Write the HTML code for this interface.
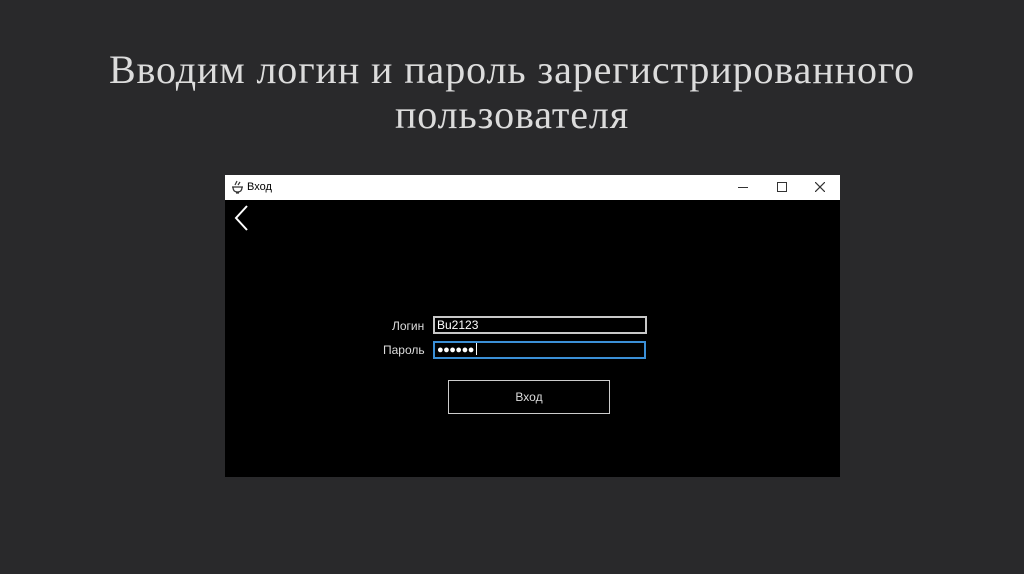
<!DOCTYPE html>
<html><head><meta charset="utf-8"><style>
body{margin:0;width:1024px;height:574px;background:#29292b;overflow:hidden;position:relative;font-family:"Liberation Sans",sans-serif}
.t{position:absolute;left:0;width:1024px;text-align:center;font-family:"Liberation Serif",serif;font-size:40px;color:#dcdcdc;line-height:45px;top:47px;letter-spacing:0.9px}
.win{position:absolute;left:225px;top:175px;width:615px;height:302px;background:#000}
.bar{position:absolute;left:0;top:0;width:615px;height:25px;background:#fff;font-size:11px;color:#000}
.lbl{position:absolute;color:#ddd;font-size:12px}
.in{position:absolute;box-sizing:border-box;border:2px solid #c8c8c8;background:#000;color:#fff;font-size:12px;padding-left:2px;line-height:14px}
</style></head><body>
<div class="t">Вводим логин и пароль зарегистрированного<br>пользователя</div>
<div class="win">
<div class="bar">
<svg style="position:absolute;left:6px;top:5px" width="13" height="14"><path d="M1 7H12M2 7Q2 12 6.5 12Q11 12 11 7M4 5L6 1M7 5L9 2M5 13H8" stroke="#333" stroke-width="1.2" fill="none"/></svg>
<span style="position:absolute;left:22px;top:6px">Вход</span>
<div style="position:absolute;left:513px;top:12px;width:10px;height:1px;background:#333"></div>
<div style="position:absolute;left:552px;top:7px;width:8px;height:8px;border:1px solid #333"></div>
<svg style="position:absolute;left:590px;top:7px" width="10" height="10"><path d="M0 0L10 10M10 0L0 10" stroke="#333" stroke-width="1.2"/></svg>
</div>
<svg style="position:absolute;left:8px;top:29px" width="18" height="28"><path d="M14 2L3 14L14 26" stroke="#fff" stroke-width="2" fill="none"/></svg>
<div class="lbl" style="left:167px;top:144px">Логин</div>
<div class="lbl" style="left:158px;top:168px">Пароль</div>
<div class="in" style="left:208px;top:141px;width:214px;height:18px">Bu2123</div>
<div class="in" style="left:208px;top:166px;width:213px;height:18px;border-color:#3b8fd6;font-size:11px;letter-spacing:-0.5px">●●●●●●<span style="display:inline-block;width:1px;height:12px;background:#fff;vertical-align:-2px;margin-left:2px"></span></div>
<div style="position:absolute;left:223px;top:205px;width:162px;height:34px;box-sizing:border-box;border:1px solid #ccc;color:#ddd;font-size:12px;text-align:center;line-height:32px">Вход</div>
</div>
</body></html>
